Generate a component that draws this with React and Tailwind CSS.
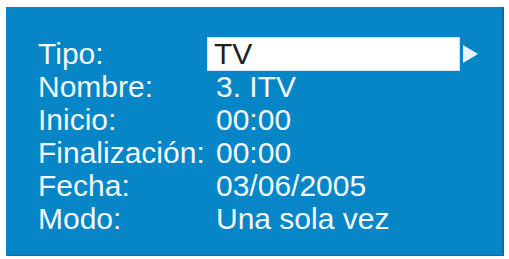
export default function App() {
  const rows = [
    ["Nombre:", "3. ITV"],
    ["Inicio:", "00:00"],
    ["Finalización:", "00:00"],
    ["Fecha:", "03/06/2005"],
    ["Modo:", "Una sola vez"],
  ];
  return (
    <div className="w-[509px] h-[259px] bg-white pt-[7px] pl-[6px]" style={{ fontFamily: '"Liberation Sans", Arial, sans-serif' }}>
      <div className="w-[498px] h-[249px] bg-[#0786c7] border-r-2 border-b border-[#0a6aa0] pt-[30px] pl-[32px]">
        <div className="grid grid-cols-[169px_1fr] text-[30px] leading-[33px] text-[#f2f8fc]">
          <div className="h-[33px] flex items-center">Tipo:</div>
          <div className="h-[33px] flex items-center">
            <div className="w-[253px] h-[34px] bg-white border border-[#cfe3ee] pl-[6px] text-[#1e1e1e] flex items-center">TV</div>
            <svg width="17" height="20" viewBox="0 0 17 20" className="ml-[2px]">
              <polygon points="1,1 16,10 1,19" fill="#e8f4fb" />
            </svg>
          </div>
          {rows.map(([l, v]) => (
            <>
              <div key={l} className="h-[33px] flex items-center whitespace-nowrap">{l}</div>
              <div key={l + "v"} className="h-[33px] flex items-center pl-[9px] whitespace-nowrap">{v}</div>
            </>
          ))}
        </div>
      </div>
    </div>
  );
}
